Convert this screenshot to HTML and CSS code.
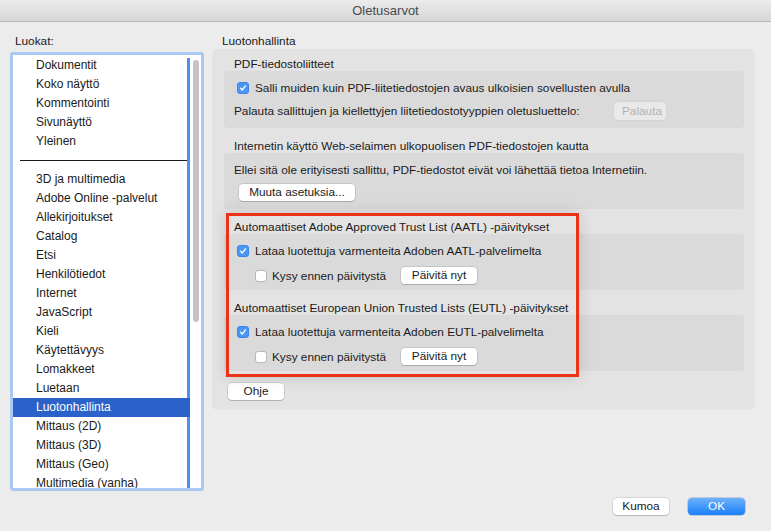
FILE: index.html
```html
<!DOCTYPE html>
<html lang="fi">
<head>
  <meta charset="UTF-8"/>
  <meta name="viewport" content="width=device-width,initial-scale=1.0"/>
  <title>Oletusarvot</title>
  <link rel="stylesheet" href="styles.css">
</head>
<body>

<div class="window">
  <div class="titlebar">Oletusarvot</div>

  <div class="main">
    <!-- Categories -->
    <div class="sidebar">
      <div class="label">Luokat:</div>
      <div class="list">
        <ul class="rows">
          <li>Dokumentit</li>
          <li>Koko näyttö</li>
          <li>Kommentointi</li>
          <li>Sivunäyttö</li>
          <li>Yleinen</li>
          <li class="sep"><span></span></li>
          <li>3D ja multimedia</li>
          <li>Adobe Online -palvelut</li>
          <li>Allekirjoitukset</li>
          <li>Catalog</li>
          <li>Etsi</li>
          <li>Henkilötiedot</li>
          <li>Internet</li>
          <li>JavaScript</li>
          <li>Kieli</li>
          <li>Käytettävyys</li>
          <li>Lomakkeet</li>
          <li>Luetaan</li>
          <li class="selected">Luotonhallinta</li>
          <li>Mittaus (2D)</li>
          <li>Mittaus (3D)</li>
          <li>Mittaus (Geo)</li>
          <li>Multimedia (vanha)</li>
        </ul>
        <div class="scrollbar"><div class="thumb"></div></div>
      </div>
    </div>

    <!-- Settings -->
    <div class="content">
      <div class="label">Luotonhallinta</div>
      <div class="panel">
        <div class="section first">
          <div class="heading">PDF-tiedostoliitteet</div>
          <div class="group">
            <label class="row"><span class="check on"></span>Salli muiden kuin PDF-liitetiedostojen avaus ulkoisien sovellusten avulla</label>
            <div class="row">
              <span class="text">Palauta sallittujen ja kiellettyjen liitetiedostotyyppien oletusluettelo:</span>
              <button class="btn disabled restore">Palauta</button>
            </div>
          </div>
        </div>

        <div class="section">
          <div class="heading">Internetin käyttö Web-selaimen ulkopuolisen PDF-tiedostojen kautta</div>
          <div class="group">
            <div class="row">Ellei sitä ole erityisesti sallittu, PDF-tiedostot eivät voi lähettää tietoa Internetiin.</div>
            <div class="row"><button class="btn change">Muuta asetuksia...</button></div>
          </div>
        </div>

        <div class="section">
          <div class="heading">Automaattiset Adobe Approved Trust List (AATL) -päivitykset</div>
          <div class="group updates">
            <label class="row"><span class="check on"></span>Lataa luotettuja varmenteita Adoben AATL-palvelimelta</label>
            <div class="row sub">
              <label class="ask"><span class="check"></span>Kysy ennen päivitystä</label>
              <button class="btn update">Päivitä nyt</button>
            </div>
          </div>
        </div>

        <div class="section">
          <div class="heading">Automaattiset European Union Trusted Lists (EUTL) -päivitykset</div>
          <div class="group updates">
            <label class="row"><span class="check on"></span>Lataa luotettuja varmenteita Adoben EUTL-palvelimelta</label>
            <div class="row sub">
              <label class="ask"><span class="check"></span>Kysy ennen päivitystä</label>
              <button class="btn update">Päivitä nyt</button>
            </div>
          </div>
        </div>

        <button class="btn help">Ohje</button>
      </div>
    </div>
  </div>

  <div class="footer">
    <button class="btn cancel">Kumoa</button>
    <button class="btn ok">OK</button>
  </div>

  <!-- annotation -->
  <div class="highlight"></div>
</div>

</body>
</html>
```

FILE: styles.css
```css
/* ========== Base ========== */
* { margin:0; padding:0; box-sizing:border-box }
body { font-family:"Liberation Sans",Arial,sans-serif; font-size:11.8px; color:#1a1a1a; background:#ececec }
button { font-family:inherit; font-size:inherit; color:inherit }

.window {
  position: relative;
  width: 771px;
  height: 531px;
  background: #ececec;
  overflow: hidden;
}

.titlebar {
  height: 22px;
  line-height: 22px;
  text-align: center;
  font-size: 13px;
  color: #4a4a4a;
  background: linear-gradient(#ececec, #d6d6d6);
  border-bottom: 1px solid #b8b8b8;
}

.main {
  display: flex;
  gap: 8px;
  padding: 11px 16px 0 10px;
}
.label { line-height: 16px; padding-left: 5px }
.content .label { padding-left: 10px }

/* ========== Category list ========== */
.sidebar { width: 194px }
.list {
  display: flex;
  height: 439px;
  margin-top: 3px;
  border: 3px solid #a9c8f2;
  border-radius: 3px;
  background: #fff;
  overflow: hidden;
}
.rows {
  list-style: none;
  width: 177px;
  padding-top: 1px;
  background: linear-gradient(to left, #4d8fea 3px, transparent 3px) 0 3px / 100% 100% no-repeat;
}
.rows li {
  height: 19px;
  line-height: 19px;
  padding-left: 23px;
  font-size: 12px;
  white-space: nowrap;
}
.rows li.sep { padding: 9px 0 0 }
.rows li.sep span {
  display: block;
  height: 1px;
  margin: 0 3px 0 7px;
  background: #1a1a1a;
}
.rows li.selected { background: #2b62c9; color: #fff }
.scrollbar { flex: 1; padding: 5px 2px 0 3px }
.thumb { width: 6px; height: 262px; border-radius: 3px; background: #c3c3c3 }

/* ========== Settings panel ========== */
.content { flex: 1 }
.panel {
  height: 361px;
  padding: 7px 11px 10px 12px;
  background: #e3e3e3;
  border-radius: 5px;
}
.section { margin-top: 10px }
.section.first { margin-top: 0 }
.heading { line-height: 16px; padding-left: 10px; margin-bottom: -1px }
.group {
  display: flex;
  flex-direction: column;
  gap: 6px;
  padding: 9px 10px 8px;
  background: #dadada;
  border-radius: 4px;
}
.group.updates { gap: 8px; padding-bottom: 6px }
.row { display: flex; align-items: center; min-height: 16px; line-height: 16px; white-space: nowrap }
.row.sub { padding-left: 18px }
.ask { display: flex; align-items: center; width: 149px }
.ask .check { margin-right: 5px }

.check {
  width: 12px;
  height: 12px;
  margin: 0 6px 0 3px;
  border: 1px solid #b8b8b8;
  border-radius: 3px;
  background: #fff;
  flex-shrink: 0;
}
.check.on {
  border-color: #3a86ef;
  background: #4c95f3 url("data:image/svg+xml;utf8,<svg xmlns='http://www.w3.org/2000/svg' viewBox='0 0 12 12'><path d='M3 6.2l2 2.2 4-5' fill='none' stroke='white' stroke-width='1.6' stroke-linecap='round' stroke-linejoin='round'/></svg>") center/10px no-repeat;
}

/* ========== Buttons ========== */
.btn {
  height: 18px;
  padding: 0 8px;
  background: #fff;
  border: none;
  border-radius: 4px;
  box-shadow: 0 0 0 0.5px rgba(0,0,0,0.18), 0 1px 1px rgba(0,0,0,0.15);
  line-height: 18px;
}
.btn.disabled { background: #e9e9e9; color: #b2b2b2; box-shadow: 0 0 0 0.5px rgba(0,0,0,0.06) }
.restore { width: 52px; margin-left: auto; margin-right: 68px }
.change { width: 116px; margin-left: 5px; height: 17px; line-height: 17px }
.update { width: 76px; height: 17px; line-height: 17px }
.help { width: 56px; margin: 12px 0 0 4px; height: 17px; line-height: 17px }

.footer {
  display: flex;
  justify-content: flex-end;
  gap: 19px;
  padding: 7px 26px 0 0;
}
.cancel { width: 56px; height: 17px; line-height: 17px }
.ok {
  width: 57px;
  height: 17px;
  line-height: 17px;
  color: #fff;
  background: linear-gradient(#6db1fa, #1c80f9);
  box-shadow: 0 0 0 0.5px rgba(0,60,160,0.4);
}

/* annotation frame over the settings */
.highlight {
  position: absolute;
  left: 226px;
  top: 213px;
  width: 353px;
  height: 164px;
  border: 3px solid #ec3319;
  box-shadow: 0 0 14px rgba(0,0,0,0.14);
}
```
